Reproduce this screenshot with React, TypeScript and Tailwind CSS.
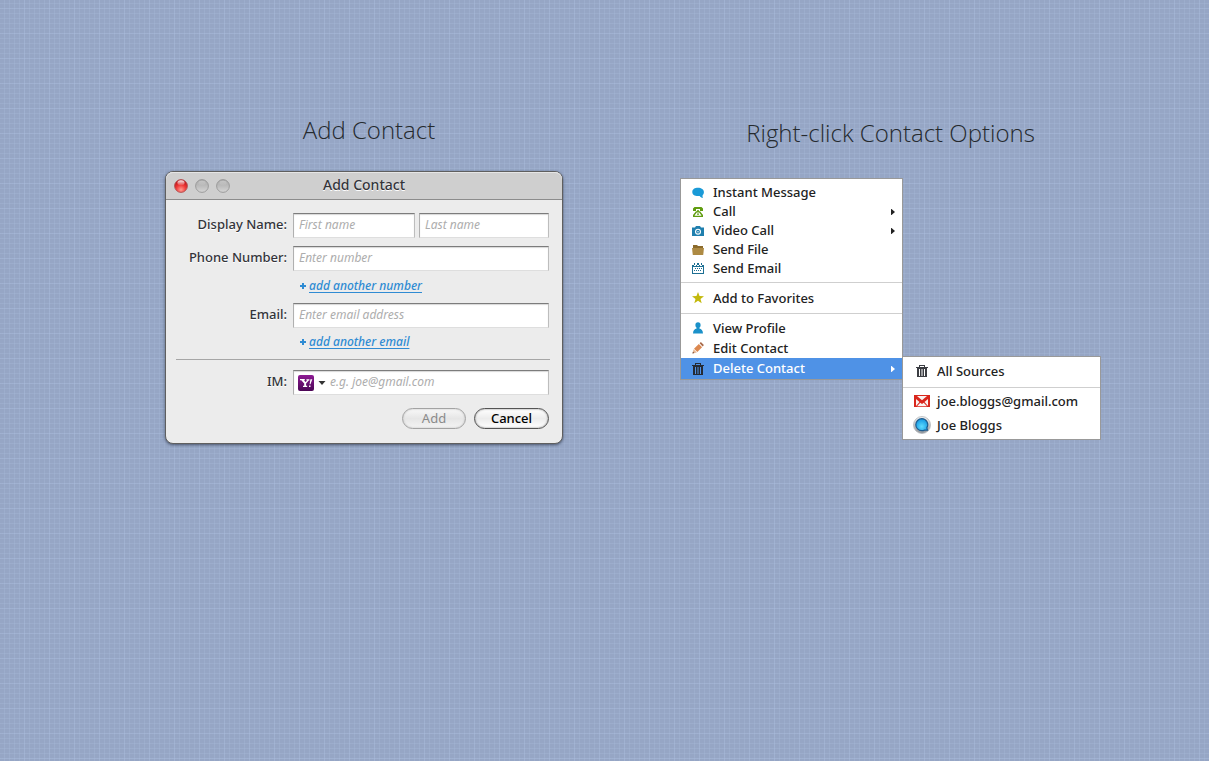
import type { ReactNode } from "react";
import clsx from "clsx";

const labelClass = "w-[111px] shrink-0 pb-[3px] text-right text-[13px] leading-5 font-medium text-[#33343a] [text-shadow:0_1px_0_#ffffff]";
const boxClass =
  "h-[25px] min-w-0 border border-t-[#7c7c7c] border-r-[#bdbdbd] border-b-[#dedede] border-l-[#b0b0b0] bg-white shadow-[inset_0_1px_1px_#d8d8d8]";
const inputText =
  "pb-0.5 font-['Noto_Sans','Open_Sans',sans-serif] text-xs leading-4 text-[#33343a] italic outline-none placeholder:text-[#adadad] placeholder:opacity-100";

function Field({ id, label, children }: { id: string; label: string; children: ReactNode }) {
  return (
    <div className="flex h-[25px] items-center gap-1.5 pr-px">
      <label htmlFor={id} className={labelClass}>
        {label}
      </label>
      {children}
    </div>
  );
}

function AddLink({ children }: { children: ReactNode }) {
  return (
    <p className="flex items-center gap-[3px] pl-[124px] text-xs leading-4 font-medium text-[#2f8bd3]">
      <svg width="6" height="6" viewBox="0 0 6 6" aria-hidden="true">
        <path d="M2 0h2v2h2v2H4v2H2V4H0V2h2z" fill="currentColor" />
      </svg>
      <a href="#add" className="italic underline underline-offset-2">
        {children}
      </a>
    </p>
  );
}

function Yahoo() {
  return (
    <svg width="16" height="16" viewBox="0 0 16 16" aria-hidden="true">
      <defs>
        <linearGradient id="yahoo" x2="0" y2="1">
          <stop offset="0" stopColor="#8d1a93" />
          <stop offset="1" stopColor="#4b0655" />
        </linearGradient>
      </defs>
      <rect width="16" height="16" rx="2" fill="url(#yahoo)" />
      <path
        d="M2 4h4.800v1.200H6l1.400 1.900 1.900-1.600h-.9V4.300h3v1.200h-.7L8.100 8.400v2.300h1.100V12H5v-1.300h1.200V8.500L3.300 5.200H2z M12.400 4.300h1.900l-1.800 5h-.9z M11 10.400h1.500V12H11z"
        fill="#fff"
      />
    </svg>
  );
}

function TrafficLights() {
  return (
    <svg width="56" height="14" viewBox="0 0 56 14" aria-hidden="true">
      <defs>
        <radialGradient id="red" cx=".5" cy=".8" r=".7">
          <stop offset="0" stopColor="#ff9a90" />
          <stop offset=".55" stopColor="#f03a38" />
          <stop offset="1" stopColor="#c01218" />
        </radialGradient>
        <linearGradient id="gray" x2="0" y2="1">
          <stop offset="0" stopColor="#a9a9a9" />
          <stop offset=".5" stopColor="#bcbcbc" />
          <stop offset="1" stopColor="#d6d6d6" />
        </linearGradient>
        <linearGradient id="gloss" x2="0" y2="1">
          <stop offset="0" stopColor="#fff" stopOpacity=".95" />
          <stop offset="1" stopColor="#fff" stopOpacity=".1" />
        </linearGradient>
      </defs>
      <circle cx="7" cy="7" r="6.4" fill="url(#red)" stroke="#b05050" strokeWidth=".9" />
      <ellipse cx="7" cy="3.7" rx="3.6" ry="2.5" fill="url(#gloss)" />
      <circle cx="28" cy="7" r="6.4" fill="url(#gray)" stroke="#969696" strokeWidth=".9" />
      <ellipse cx="28" cy="4" rx="3.6" ry="2.2" fill="url(#gloss)" opacity=".3" />
      <circle cx="49" cy="7" r="6.4" fill="url(#gray)" stroke="#969696" strokeWidth=".9" />
      <ellipse cx="49" cy="4" rx="3.6" ry="2.2" fill="url(#gloss)" opacity=".3" />
    </svg>
  );
}

function AddContactWindow() {
  return (
    <form className="rounded-lg border border-[#5f5f5f] bg-[#ececec] shadow-[0_1px_3px_rgba(30,40,60,0.65)]">
      <header className="grid h-7 grid-cols-[1fr_auto_1fr] items-center rounded-t-[7px] border-b border-[#8c8c8c] bg-[#cfcfcf] px-2 shadow-[inset_0_1px_0_#e6e6e6]">
        <TrafficLights />
        <h2 className="pb-0.5 text-sm leading-5 font-medium text-[#33343a] [text-shadow:0_1px_0_#ffffff]">Add Contact</h2>
      </header>
      <div className="pt-[13px] pr-3 pb-3.5 pl-2.5">
        <Field id="first" label="Display Name:">
          <div className="flex min-w-0 flex-1 gap-1">
            <input id="first" placeholder="First name" className={clsx(boxClass, inputText, "w-[122px] px-[5px]")} />
            <input aria-label="Last name" placeholder="Last name" className={clsx(boxClass, inputText, "flex-1 px-[5px]")} />
          </div>
        </Field>
        <div className="mt-2">
          <Field id="phone" label="Phone Number:">
            <input id="phone" placeholder="Enter number" className={clsx(boxClass, inputText, "flex-1 px-[5px]")} />
          </Field>
        </div>
        <div className="pt-[7px] pb-[9px]">
          <AddLink>add another number</AddLink>
        </div>
        <Field id="email" label="Email:">
          <input id="email" placeholder="Enter email address" className={clsx(boxClass, inputText, "flex-1 px-[5px]")} />
        </Field>
        <div className="pt-1.5 pb-[9px]">
          <AddLink>add another email</AddLink>
        </div>
        <hr className="mb-2.5 border-t border-[#a6a6a6]" />
        <Field id="im" label="IM:">
          <div className={clsx(boxClass, "flex flex-1 items-center gap-1 pl-1")}>
            <div className="relative flex items-center gap-1">
              <Yahoo />
              <svg width="8" height="4" viewBox="0 0 8 4" aria-hidden="true">
                <path d="M0.5 0h7L4 4z" fill="#333" />
              </svg>
              <select aria-label="IM service" className="absolute inset-0 w-full opacity-0">
                <option>Yahoo!</option>
                <option>Gmail</option>
              </select>
            </div>
            <input id="im" placeholder="e.g. joe@gmail.com" className={clsx(inputText, "min-w-0 flex-1 bg-transparent")} />
          </div>
        </Field>
        <div className="mt-[13px] flex justify-end gap-2 pr-px text-[13px]">
          <button
            type="submit"
            disabled
            className="flex h-[21px] w-16 justify-center rounded-full border border-[#a3a3a3] bg-linear-to-b from-[#f8f8f8] via-[#e6e6e6] to-[#f4f4f4] leading-[18px] text-[#8a8a8a] shadow-[inset_0_0_2px_#b5b5b5]"
          >
            Add
          </button>
          <button
            type="button"
            className="flex h-[21px] w-[75px] justify-center rounded-full border border-[#545454] bg-linear-to-b from-white via-[#ececec] to-white leading-[18px] font-medium text-black shadow-[inset_0_0_2px_#777777]"
          >
            Cancel
          </button>
        </div>
      </div>
    </form>
  );
}

function Svg({ w = 12, h = 12, children }: { w?: number; h?: number; children: ReactNode }) {
  return (
    <svg width={w} height={h} viewBox={`0 0 ${w} ${h}`} className="shrink-0" aria-hidden="true">
      {children}
    </svg>
  );
}

const bubble = (
  <Svg>
    <path d="M6 .8C2.800.8.3 2.300.3 4.900S2.500 9 6 9l1.700-.1c.6 1 1.700 1.900 3.300 2.100-.5-.8-.6-2-.3-2.900.8-.7 1.200-1.800 1.200-3.100C11.900 2.400 9.300.8 6 .8z" fill="#1a9ad7" />
  </Svg>
);
const phone = (
  <Svg>
    <path
      fillRule="evenodd"
      d="M2.500 1h7L11 2.500V5H8V3H4v2H1V2.500zM4 5.200h1.200V4h1.600v1.200H8L11 9v2H1V9zM4.800 6.500L2.700 9.300v.4h6.600v-.4L7.200 6.500z"
      fill="#619d11"
    />
    <path d="M5 7.400h2v1.400H5z" fill="#619d11" />
  </Svg>
);
const camera = (
  <Svg>
    <path fillRule="evenodd" d="M0 2.500h3L4 1h4l1 1.500h3V11H0zM6 3.700a3 3 0 100 6 3 3 0 000-6z" fill="#1f7fae" />
    <circle cx="6" cy="6.700" r="1.300" fill="none" stroke="#1f7fae" strokeWidth="1.200" />
  </Svg>
);
const folder = (
  <Svg>
    <path d="M1 1h4l1 1h5v2H1z" fill="#8b6a2b" />
    <path d="M0 4h12l-.8 7H.8z" fill="#ad8a43" />
  </Svg>
);
const calendar = (
  <Svg>
    <path fillRule="evenodd" d="M0 2h2v1h2V2h1v1h2V2h1v1h2V2h2v9H0zM1 4v6h10V4z" fill="#1d6f93" />
    <path d="M2 0h1v2H2zM5 0h2v2H5zM9 0h1v2H9z" fill="#1d6f93" />
    <path d="M3 5h1v1H3zM5 5h1v1H5zM7 5h1v1H7zM9 5h1v1H9zM2 7h1v1H2zM4 7h1v1H4zM6 7h1v1H6zM8 7h1v1H8z" fill="#1d6f93" />
  </Svg>
);
const star = (
  <Svg>
    <path d="M6 0l1.500 4 4.500.2-3.500 2.700 1.200 4.300L6 8.800l-3.700 2.400 1.200-4.300L0 4.200 4.500 4z" fill="#c3b90c" />
  </Svg>
);
const person = (
  <Svg>
    <path d="M6 .3c1.700 0 2.600 1.100 2.600 2.600 0 1.300-.5 2.200-1.200 2.800v.9c2 .5 3.400 1.600 3.600 4.900H1c.2-3.300 1.600-4.400 3.600-4.900v-.9C3.900 5.100 3.400 4.200 3.400 2.900 3.400 1.400 4.300.3 6 .3z" fill="#1b91c9" />
  </Svg>
);
const pencil = (
  <Svg>
    <path d="M2 6.700L6.800 2l3.300 3.300L5.300 10z" fill="#dc8850" />
    <path d="M7.600 1.300L8.900.1l3 2.900-1.200 1.400z" fill="#a96a4a" />
    <path d="M1.600 7.300l3.200 3.200-4.300 1z" fill="#e7b48f" />
    <path d="M.9 9.700l1.400 1.400-1.800.4z" fill="#6b3d2a" />
  </Svg>
);
const trash = (color: string) => (
  <Svg>
    <path
      fillRule="evenodd"
      d="M3 0h6v2h3v1H0V2h3zM4 1v1h4V1zM1 3h10v9H1zM3 4v7h1V4zM5.500 4v7h1V4zM8 4v7h1V4z"
      fill={color}
    />
  </Svg>
);
const gmail = (
  <Svg w={16} h={12}>
    <path d="M0 0h16v12H0z" fill="#d9261c" />
    <path d="M2 4l3.500 3L2 11zM14 4l-3.500 3L14 11zM3 1h10L8 5.200zM6.300 7.700L8 9l1.700-1.300L13 11.200H3z" fill="#fbf3f1" />
  </Svg>
);
const chat = (
  <Svg w={18} h={18}>
    <defs>
      <linearGradient id="ring" x2="0" y2="1">
        <stop offset="0" stopColor="#f4f4f4" />
        <stop offset="1" stopColor="#8d9298" />
      </linearGradient>
      <radialGradient id="sky" cy=".65">
        <stop offset="0" stopColor="#5fdcff" />
        <stop offset="1" stopColor="#22a5e8" />
      </radialGradient>
    </defs>
    <circle cx="9" cy="9" r="8.500" fill="url(#ring)" stroke="#b4b7bb" strokeWidth=".8" />
    <path d="M8.800 2.700a6 6 0 100 12c1 0 1.900-.2 2.700-.6h3l-.7-2.200a6 6 0 00-5-9.200z" fill="url(#sky)" stroke="#1c5c90" strokeWidth="1.200" />
  </Svg>
);

function Arrow() {
  return (
    <svg width="4" height="6" viewBox="0 0 4 6" className="ml-auto" aria-hidden="true">
      <path d="M0 0h.5L4 3 .5 6H0z" fill="currentColor" />
    </svg>
  );
}

interface ItemProps {
  icon: ReactNode;
  label: string;
  arrow?: boolean;
  className?: string;
}

function MenuItem({ icon, label, arrow, className = "h-[19px] text-[#222222]" }: ItemProps) {
  return (
    <li role="none">
      <button
        type="button"
        role="menuitem"
        aria-haspopup={arrow ? "menu" : undefined}
        className={clsx("flex w-full items-center gap-[9px] pr-[7px] pl-[11px] text-left text-[13px] leading-[19px] font-medium", className)}
      >
        {icon}
        {label}
        {arrow && <Arrow />}
      </button>
    </li>
  );
}

function SubItem({ icon, label, className }: ItemProps) {
  return (
    <li role="none">
      <button
        type="button"
        role="menuitem"
        className={clsx("flex w-full items-center gap-1.5 px-2.5 text-left text-[13px] leading-5 font-medium text-[#222222]", className)}
      >
        <span className="flex w-[18px] justify-center">{icon}</span>
        {label}
      </button>
    </li>
  );
}

function ContextMenu() {
  return (
    <div className="relative w-[223px]">
      <ul role="menu" className="border border-[#999999] bg-white pt-1">
        <MenuItem icon={bubble} label="Instant Message" />
        <MenuItem icon={phone} label="Call" arrow />
        <MenuItem icon={camera} label="Video Call" arrow />
        <MenuItem icon={folder} label="Send File" />
        <MenuItem icon={calendar} label="Send Email" />
        <li role="separator" className="mt-1 border-t border-[#cfcfcf]" />
        <MenuItem icon={star} label="Add to Favorites" className="h-[30px] text-[#222222]" />
        <li role="separator" className="mb-1 border-t border-[#cfcfcf]" />
        <MenuItem icon={person} label="View Profile" className="h-5 text-[#222222]" />
        <MenuItem icon={pencil} label="Edit Contact" className="h-5 text-[#222222]" />
        <MenuItem icon={trash("#252a33")} label="Delete Contact" arrow className="h-[21px] bg-[#4f92e6] text-white" />
      </ul>
      <ul role="menu" className="absolute top-[178px] left-[222px] w-[199px] border border-[#999999] bg-white pb-0.5">
        <SubItem icon={trash("#3b3d42")} label="All Sources" className="h-[30px] pb-0.5" />
        <li role="separator" className="mb-px border-t border-[#cfcfcf]" />
        <SubItem icon={gmail} label="joe.bloggs@gmail.com" className="h-6" />
        <SubItem icon={chat} label="Joe Bloggs" className="h-6" />
      </ul>
    </div>
  );
}

const headingClass = "font-['Open_Sans','Noto_Sans',sans-serif] text-2xl leading-8 font-light text-[#252a2e]";
const weave =
  "bg-[#96a6c5] bg-[image:linear-gradient(to_right,#b4c8e82c_1px,transparent_1px),linear-gradient(to_bottom,#b4c8e82c_1px,transparent_1px),linear-gradient(to_right,#b4c8e830_1px,transparent_1px),linear-gradient(to_bottom,#b4c8e830_1px,transparent_1px)] bg-size-[25px_25px,25px_25px,5px_5px,5px_5px] bg-position-[24px_8px,24px_8px,4px_3px,4px_3px]";

export default function App() {
  return (
    <main
      className={clsx(
        "flex min-h-screen items-start justify-center gap-[117px] pt-[114px] pl-[57px] font-['Noto_Sans','Open_Sans',sans-serif]",
        weave,
      )}
    >
      <section className="w-full max-w-[398px]">
        <h1 className={clsx(headingClass, "mb-[25px] pl-2.5 text-center")}>Add Contact</h1>
        <AddContactWindow />
      </section>
      <section className="w-full max-w-[421px] pt-[3px]">
        <h1 className={clsx(headingClass, "mb-[29px] text-center")}>Right-click Contact Options</h1>
        <ContextMenu />
      </section>
    </main>
  );
}
